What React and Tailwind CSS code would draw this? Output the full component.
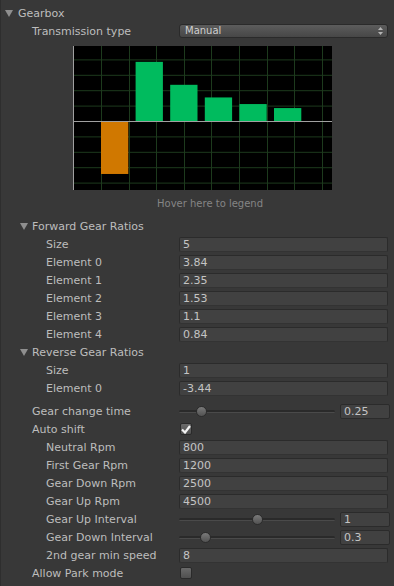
import React from 'react';

const Foldout = ({ className = '' }) => (
  <svg width="8" height="7" viewBox="0 0 8 7" className={className}>
    <polygon points="0,0 8,0 4,7" fill="#8f8f8f" />
  </svg>
);

const Field = ({ value }) => (
  <div className="h-[15px] flex-1 bg-[#414141] border border-[#2b2b2b] border-b-[#333] rounded-[2px] px-[3px] flex items-center text-[#c4c4c4] leading-none">
    {value}
  </div>
);

const Row = ({ label, indent = 31, children, className = '' }) => (
  <div className={`h-[18px] flex items-center ${className}`}>
    <div className="w-[178px] shrink-0 whitespace-nowrap" style={{ paddingLeft: indent }}>
      {label}
    </div>
    <div className="flex-1 flex items-center mr-[6px]">{children}</div>
  </div>
);

const Slider = ({ pos, value }) => (
  <>
    <div className="relative w-[156px] h-[11px] flex items-center">
      <div className="w-full h-[3px] rounded-full bg-[#2a2a2a] border-b border-[#4a4a4a]" />
      <div
        className="absolute top-0 w-[11px] h-[11px] rounded-full bg-gradient-to-b from-[#7a7a7a] to-[#525252] border border-[#2c2c2c]"
        style={{ left: pos - 5.5 }}
      />
    </div>
    <div className="ml-[5px]">
      <div className="h-[15px] w-[50px] bg-[#414141] border border-[#2b2b2b] rounded-[2px] px-[3px] flex items-center text-[#c4c4c4] leading-none">
        {value}
      </div>
    </div>
  </>
);

const Checkbox = ({ checked }) => (
  <div className="w-[12px] h-[12px] ml-[1px] rounded-[2px] bg-gradient-to-b from-[#6a6a6a] to-[#505050] border border-[#2a2a2a] flex items-center justify-center">
    {checked && (
      <svg width="10" height="9" viewBox="0 0 10 9">
        <path d="M1 4.5 L4 7.5 L9 1" stroke="#f2f2f2" strokeWidth="2.2" fill="none" />
      </svg>
    )}
  </div>
);

const Chart = () => {
  const zero = 75;
  const unit = 15.4;
  const hLines = [-4, -3, -2, -1, 1, 2, 3, 4].map((k) => zero - k * unit);
  const vLines = [0, 1, 2, 3, 4, 5, 6, 7, 8].map((k) => 28 + k * 27.6);
  const ratios = [-3.44, 3.84, 2.35, 1.53, 1.1, 0.84];
  return (
    <svg width="259" height="144" className="block">
      <rect x="0" y="0" width="259" height="144" fill="#000" />
      {hLines.map((y) => (
        <line key={y} x1="0" x2="259" y1={y + 0.5} y2={y + 0.5} stroke="#1d3a1d" strokeWidth="1" />
      ))}
      {vLines.map((x) => (
        <line key={x} x1={Math.round(x) + 0.5} x2={Math.round(x) + 0.5} y1="0" y2="144" stroke="#1d3a1d" strokeWidth="1" />
      ))}
      {ratios.map((r, i) => {
        const h = Math.abs(r) * unit;
        const x = 28 + i * 34.6;
        return (
          <rect
            key={i}
            x={x}
            y={r > 0 ? zero - h : zero}
            width="27.3"
            height={h}
            fill={r > 0 ? '#00bb5e' : '#d07800'}
          />
        );
      })}
      <line x1="0" x2="259" y1={zero + 0.5} y2={zero + 0.5} stroke="#a0a0a0" strokeWidth="1" />
      <line x1="0.5" x2="0.5" y1="0" y2="144" stroke="#a0a0a0" strokeWidth="1" />
    </svg>
  );
};

export default function App() {
  const forward = ['3.84', '2.35', '1.53', '1.1', '0.84'];
  return (
    <div
      className="w-[394px] h-[586px] bg-[#383838] text-[#bdbdbd] text-[11px] leading-none overflow-hidden border-l border-[#2e2e2e]"
      style={{ fontFamily: '"DejaVu Sans", Verdana, sans-serif' }}
    >
      <div className="pt-[4px]">
        <div className="h-[18px] flex items-center pl-[4px]">
          <Foldout className="mr-[5px]" />
          <span>Gearbox</span>
        </div>

        <Row label="Transmission type">
          <div className="h-[14px] flex-1 rounded-[3px] bg-gradient-to-b from-[#5c5c5c] to-[#474747] border border-[#2a2a2a] flex items-center justify-between pl-[5px] pr-[4px] text-[#cfcfcf] text-[10px]">
            <span>Manual</span>
            <svg width="5" height="8" viewBox="0 0 5 8">
              <polygon points="2.5,0 5,3 0,3" fill="#b5b5b5" />
              <polygon points="0,5 5,5 2.5,8" fill="#b5b5b5" />
            </svg>
          </div>
        </Row>

        <div className="mt-[6px] pl-[72px]">
          <Chart />
        </div>
        <div className="h-[27px] flex items-center pl-[156px] text-[10px] text-[#858585]">
          Hover here to legend
        </div>

        <div className="h-[18px] flex items-center pl-[19px]">
          <Foldout className="mr-[4px]" />
          <span>Forward Gear Ratios</span>
        </div>
        <Row label="Size" indent={45}>
          <Field value="5" />
        </Row>
        {forward.map((v, i) => (
          <Row key={i} label={`Element ${i}`} indent={45}>
            <Field value={v} />
          </Row>
        ))}

        <div className="h-[18px] flex items-center pl-[19px]">
          <Foldout className="mr-[4px]" />
          <span>Reverse Gear Ratios</span>
        </div>
        <Row label="Size" indent={45}>
          <Field value="1" />
        </Row>
        <Row label="Element 0" indent={45}>
          <Field value="-3.44" />
        </Row>

        <Row label="Gear change time" className="mt-[5px]">
          <Slider pos={22} value="0.25" />
        </Row>
        <Row label="Auto shift">
          <Checkbox checked />
        </Row>
        <Row label="Neutral Rpm" indent={45}>
          <Field value="800" />
        </Row>
        <Row label="First Gear Rpm" indent={45}>
          <Field value="1200" />
        </Row>
        <Row label="Gear Down Rpm" indent={45}>
          <Field value="2500" />
        </Row>
        <Row label="Gear Up Rpm" indent={45}>
          <Field value="4500" />
        </Row>
        <Row label="Gear Up Interval" indent={45}>
          <Slider pos={78} value="1" />
        </Row>
        <Row label="Gear Down Interval" indent={45}>
          <Slider pos={26} value="0.3" />
        </Row>
        <Row label="2nd gear min speed" indent={45}>
          <Field value="8" />
        </Row>
        <Row label="Allow Park mode">
          <Checkbox />
        </Row>
      </div>
    </div>
  );
}
